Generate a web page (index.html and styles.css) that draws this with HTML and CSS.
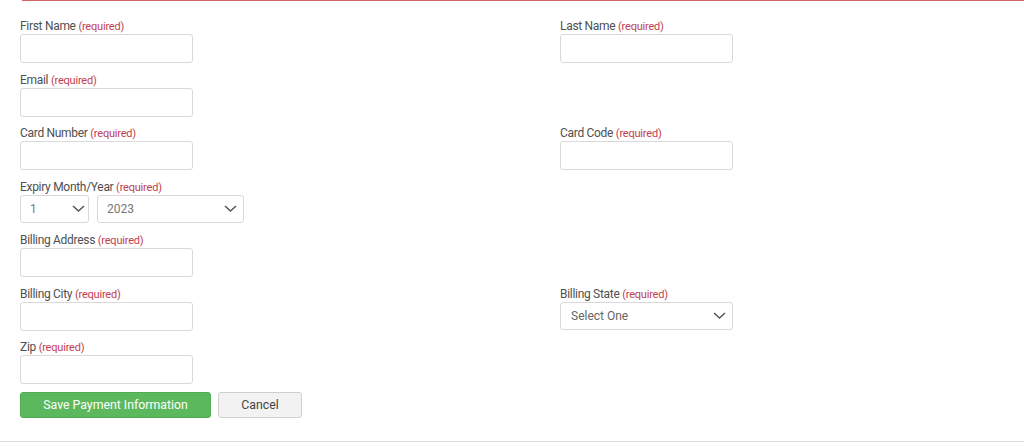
FILE: index.html
```html
<!DOCTYPE html>
<html>
<head>
<meta charset="utf-8">
<link rel="stylesheet" href="styles.css">
</head>
<body>
<div class="page">
  <div class="topline"></div>
  <form class="form">
    <div class="field">
      <label class="lbl">First Name <span class="req">(required)</span></label>
      <div class="input"></div>
    </div>
    <div class="field">
      <label class="lbl">Last Name <span class="req">(required)</span></label>
      <div class="input"></div>
    </div>
    <div class="field">
      <label class="lbl">Email <span class="req">(required)</span></label>
      <div class="input"></div>
    </div>
    <div class="field"></div>
    <div class="field">
      <label class="lbl">Card Number <span class="req">(required)</span></label>
      <div class="input"></div>
    </div>
    <div class="field">
      <label class="lbl">Card Code <span class="req">(required)</span></label>
      <div class="input"></div>
    </div>
    <div class="field">
      <label class="lbl">Expiry Month/Year <span class="req">(required)</span></label>
      <div class="selects">
        <div class="select sel-month"><span>1</span><svg class="chev" width="13" height="7" viewBox="0 0 13 7"><path d="M1 1 L6.5 6 L12 1" fill="none" stroke="#555" stroke-width="1.5"/></svg></div>
        <div class="select sel-year"><span>2023</span><svg class="chev" width="13" height="7" viewBox="0 0 13 7"><path d="M1 1 L6.5 6 L12 1" fill="none" stroke="#555" stroke-width="1.5"/></svg></div>
      </div>
    </div>
    <div class="field"></div>
    <div class="field">
      <label class="lbl">Billing Address <span class="req">(required)</span></label>
      <div class="input"></div>
    </div>
    <div class="field"></div>
    <div class="field">
      <label class="lbl">Billing City <span class="req">(required)</span></label>
      <div class="input"></div>
    </div>
    <div class="field">
      <label class="lbl">Billing State <span class="req">(required)</span></label>
      <div class="select sel-state"><span>Select One</span><svg class="chev" width="13" height="7" viewBox="0 0 13 7"><path d="M1 1 L6.5 6 L12 1" fill="none" stroke="#555" stroke-width="1.5"/></svg></div>
    </div>
    <div class="field">
      <label class="lbl">Zip <span class="req">(required)</span></label>
      <div class="input"></div>
    </div>
    <div class="field"></div>
  </form>
  <div class="actions">
    <button type="button" class="btn btn-save">Save Payment Information</button>
    <button type="button" class="btn btn-cancel">Cancel</button>
  </div>
  <div class="bottomline"></div>
</div>
</body>
</html>
```
FILE: styles.css
```css
* { box-sizing: border-box; }
html, body { margin: 0; padding: 0; background: #fff; }
body {
  font-family: Roboto, "Liberation Sans", Arial, sans-serif;
  width: 1024px;
  height: 447px;
  overflow: hidden;
}
.page { display: flex; flex-direction: column; }
.topline {
  height: 1px;
  margin-left: 22px;
  background: #d2676a;
}
.form {
  display: grid;
  grid-template-columns: 540px 1fr;
  padding: 18px 0 0 20px;
}
.field {
  height: 53.5px;
  display: flex;
  flex-direction: column;
}
.lbl {
  font-size: 12px;
  line-height: 15px;
  color: #4f4f4f;
  letter-spacing: -0.3px;
  display: block;
}
.req {
  font-size: 11px;
  color: #c2404f;
  letter-spacing: -0.2px;
}
.input {
  width: 173px;
  height: 29px;
  border: 1px solid #d9d9d9;
  border-radius: 3px;
  background: #fff;
}
.selects { display: flex; gap: 8px; }
.select {
  height: 28px;
  border: 1px solid #d9d9d9;
  border-radius: 3px;
  background: #fff;
  display: flex;
  align-items: center;
  justify-content: space-between;
  font-size: 12px;
  color: #777;
  padding-left: 9px;
}
.sel-month { width: 69px; padding-right: 3px; }
.sel-year { width: 147px; padding-right: 6px; }
.sel-state { width: 173px; padding-left: 10px; padding-right: 6px; color: #666; }
.chev { display: block; }
.actions {
  display: flex;
  gap: 7px;
  padding-left: 20px;
  margin-top: -2px;
}
.btn {
  height: 26px;
  font-family: Roboto, "Liberation Sans", Arial, sans-serif;
  font-size: 12.3px;
  border-radius: 3px;
  padding: 0;
  cursor: pointer;
}
.btn-save {
  width: 191px;
  background: #5cb85c;
  border: 1px solid #52ad52;
  color: #fff;
}
.btn-cancel {
  width: 84px;
  background: #f2f2f2;
  border: 1px solid #cfcfcf;
  color: #444;
}
.bottomline {
  height: 1px;
  background: #dcdcdc;
  margin-top: 23px;
}
```
